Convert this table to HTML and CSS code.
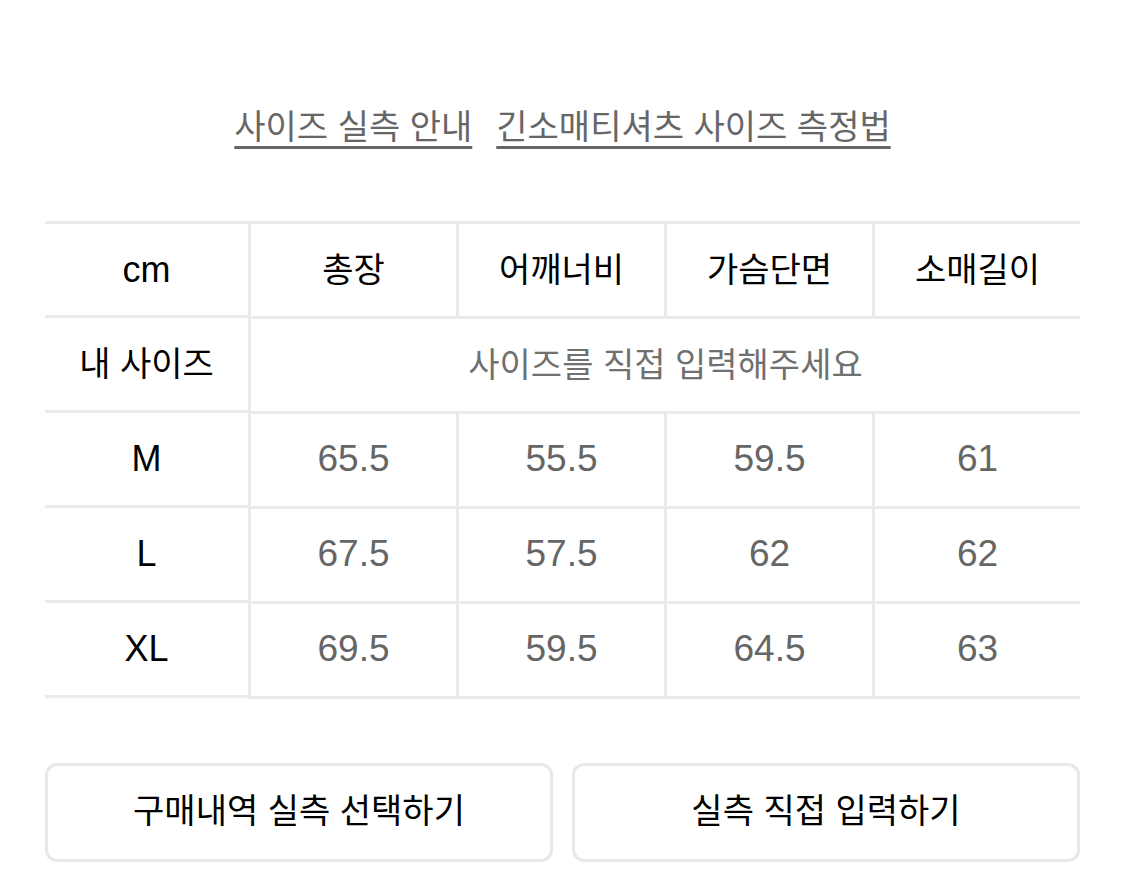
FILE: index.html
```html
<!DOCTYPE html>
<html lang="ko">
<head>
<meta charset="utf-8">
<title>사이즈 실측 안내</title>
<link rel="stylesheet" href="styles.css">
</head>
<body>
<div class="page">
  <nav class="links">
    <a href="#" class="link">사이즈 실측 안내</a>
    <a href="#" class="link">긴소매티셔츠 사이즈 측정법</a>
  </nav>

  <div class="size-table">
    <div class="fixed-col">
      <div class="cell head latin">cm</div>
      <div class="cell head">내 사이즈</div>
      <div class="cell head latin">M</div>
      <div class="cell head latin">L</div>
      <div class="cell head latin">XL</div>
    </div>
    <div class="data-grid">
      <div class="cell head">총장</div>
      <div class="cell head">어깨너비</div>
      <div class="cell head">가슴단면</div>
      <div class="cell head">소매길이</div>

      <div class="cell my-size">사이즈를 직접 입력해주세요</div>

      <div class="cell num">65.5</div>
      <div class="cell num">55.5</div>
      <div class="cell num">59.5</div>
      <div class="cell num">61</div>

      <div class="cell num">67.5</div>
      <div class="cell num">57.5</div>
      <div class="cell num">62</div>
      <div class="cell num">62</div>

      <div class="cell num">69.5</div>
      <div class="cell num">59.5</div>
      <div class="cell num">64.5</div>
      <div class="cell num">63</div>
    </div>
  </div>

  <div class="actions">
    <button class="btn" type="button">구매내역 실측 선택하기</button>
    <button class="btn" type="button">실측 직접 입력하기</button>
  </div>
</div>
</body>
</html>
```

FILE: styles.css
```css
* {
  box-sizing: border-box;
}

html, body {
  margin: 0;
  padding: 0;
  background: #ffffff;
}

body {
  font-family: "Liberation Sans", "Noto Sans CJK KR", sans-serif;
  color: #000;
}

.page {
  padding: 0 45px;
}

.links {
  display: flex;
  justify-content: center;
  gap: 24px;
  padding-top: 104px;
  margin-bottom: 76px;
}

.link {
  font-family: "Noto Sans CJK KR", sans-serif;
  font-size: 34px;
  line-height: 41px;
  color: #666666;
  text-decoration: underline;
  text-decoration-thickness: 3px;
  text-underline-offset: 7px;
  text-decoration-color: #666666;
}

.size-table {
  display: flex;
}

.fixed-col {
  width: 203px;
  flex: none;
  border-top: 3px solid #ebebeb;
}

.data-grid {
  flex: 1;
  display: grid;
  grid-template-columns: repeat(4, 1fr);
  border-top: 3px solid #ebebeb;
}

.cell {
  height: 95px;
  display: flex;
  align-items: center;
  justify-content: center;
  border-bottom: 3px solid #ebebeb;
  font-family: "Noto Sans CJK KR", sans-serif;
  font-size: 34px;
  padding-bottom: 5px;
}

.data-grid .cell {
  border-left: 3px solid #ebebeb;
}

.fixed-col .cell:first-child {
  height: 94px;
}

.head {
  color: #000000;
}

.latin {
  font-family: "Liberation Sans", sans-serif;
  font-size: 36px;
  padding-bottom: 0;
}

.num {
  font-family: "Liberation Sans", sans-serif;
  font-size: 37px;
  color: #666666;
  padding-bottom: 2px;
}

.my-size {
  grid-column: 1 / span 4;
  color: #707070;
}

.actions {
  display: flex;
  gap: 19px;
  margin-top: 64px;
}

.btn {
  flex: 1;
  height: 99px;
  background: #fff;
  border: 3px solid #e8e8e8;
  border-radius: 12px;
  font-family: "Noto Sans CJK KR", sans-serif;
  font-size: 34px;
  color: #000000;
  padding: 0 0 8px;
}
```
